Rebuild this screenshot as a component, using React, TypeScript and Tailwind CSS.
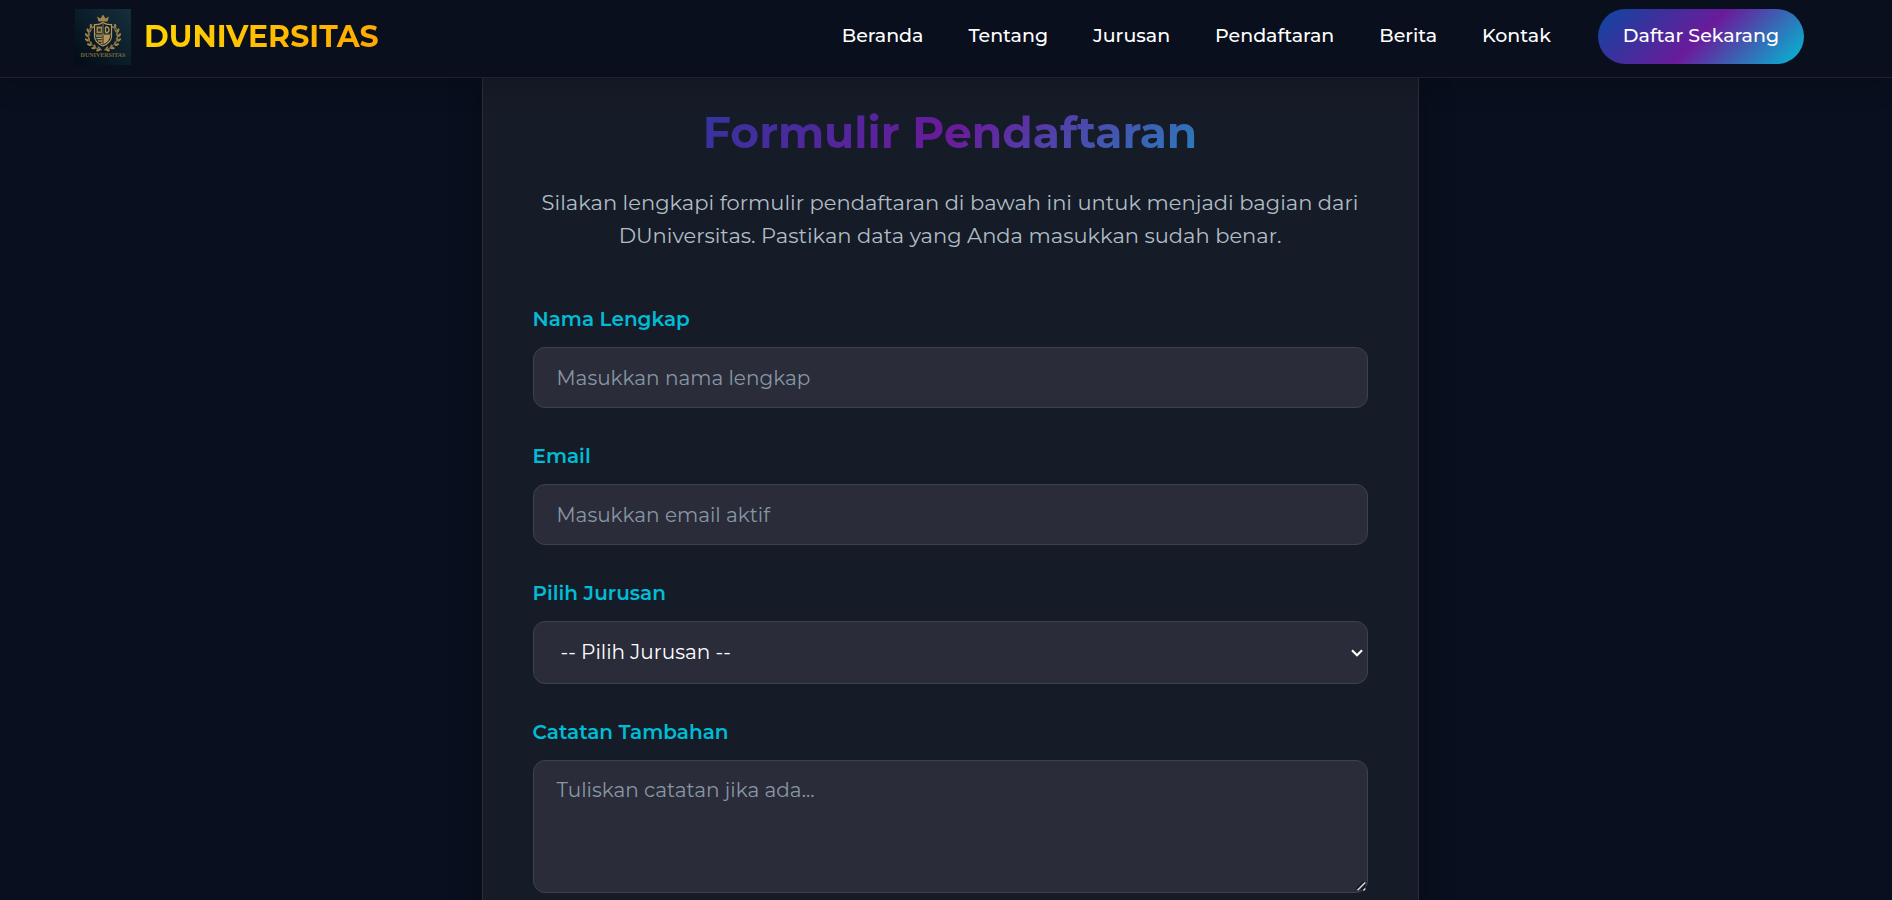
import React from "react";

const links = ["Beranda", "Tentang", "Jurusan", "Pendaftaran", "Berita", "Kontak"];

const fieldClass =
  "block w-full rounded-xl border border-[#3f404e] bg-[#2a2c3a] px-[23px] text-[20px] text-white placeholder:text-[#8797a2]";
const labelClass = "mb-3 block text-[20px] leading-8 font-semibold text-[#00bcd4]";

function Leaves() {
  const leaves = [
    [17, 17, 25],
    [14, 21, 5],
    [12.5, 25.5, -5],
    [12.5, 30, -20],
    [14.5, 34.5, -40],
    [18.5, 38, -60],
    [23, 40, -75],
  ];
  return (
    <g>
      <path d="M17 15.5 Q10 26 15.5 34 Q20 40 27 41" fill="none" stroke="#a08348" strokeWidth="0.9" />
      {leaves.map(([x, y, r]) => (
        <g key={y} transform={`translate(${x} ${y}) rotate(${r})`}>
          <ellipse cx="-1.2" cy="0" rx="1.1" ry="2.3" transform="rotate(-30)" fill="#a08348" />
          <ellipse cx="1.6" cy="0" rx="0.9" ry="2.1" transform="rotate(30)" fill="#8a713f" />
        </g>
      ))}
    </g>
  );
}

function Crest() {
  return (
    <svg viewBox="0 0 56 56" className="size-14 shrink-0" aria-hidden="true">
      <defs>
        <linearGradient id="crest-bg" x1="1" y1="0" x2="0" y2="1">
          <stop offset="0" stopColor="#172f3c" />
          <stop offset="0.5" stopColor="#0a1e2a" />
          <stop offset="1" stopColor="#020c15" />
        </linearGradient>
      </defs>
      <rect width="56" height="56" fill="url(#crest-bg)" />
      <path d="M23.5 12.5 L22 7.5 L25.5 9.5 L28 5.5 L30.5 9.5 L34 7.5 L32.5 12.5 Z" fill="#a08348" />
      <Leaves />
      <g transform="translate(56 0) scale(-1 1)">
        <Leaves />
      </g>
      <path d="M19.5 15.5 Q24 16 28 13.5 Q32 16 36.5 15.5 V27 Q36.5 33.5 28 37 Q19.5 33.5 19.5 27 Z" fill="#0b222e" stroke="#b8965a" strokeWidth="1.2" />
      <path d="M21.5 17.5 H27 V24 H21.5 Z" fill="#a08348" />
      <path d="M23 19.5 H25.8 V22.5 H23 Z" fill="#2a3030" />
      <path d="M30.5 18 V23.5 M30.5 18 H32 Q34 18.5 34 20.7 Q34 23.2 32 23.5 H30.5" fill="none" stroke="#b8965a" strokeWidth="1.3" />
      <path d="M21 27 H27.5 M21.5 29.5 H27.5 M23 32 H27.5 M25.5 34.3 H27.5" stroke="#b8965a" strokeWidth="1.4" />
      <path d="M28.7 26 H35 V27 Q34.8 32 28.7 35.3 Z" fill="#b8965a" />
      <path d="M28 14.5 V36 M20 25.2 H36" stroke="#b8965a" strokeWidth="0.7" />
      <text x="28" y="47.8" textAnchor="middle" fontSize="6" fontWeight="700" fill="#7d683d" className="font-['Liberation_Serif',serif]">
        DUNIVERSITAS
      </text>
    </svg>
  );
}

export default function App() {
  return (
    <div className="h-screen overflow-hidden bg-[#080f1e] font-['Montserrat','Inter',sans-serif] text-white">
      <header className="relative z-10 flex h-[78px] items-center justify-between border-b border-[#1f222e] bg-[#090f1d] pr-[88px] pl-[75px] shadow-[0_4px_30px_rgba(0,0,0,0.2)]">
        <a href="#beranda" className="flex items-center gap-[13px] pb-1">
          <Crest />
          <span className="bg-[linear-gradient(135deg,#ffd700,#ffa500)] bg-clip-text text-[30px] leading-10 font-bold text-transparent">
            DUNIVERSITAS
          </span>
        </a>
        <nav className="flex items-center gap-[47px] pb-1 text-[19px] leading-7 font-medium">
          <div className="flex gap-[45px] pb-0.5">
            {links.map((link) => (
              <a key={link} href={`#${link.toLowerCase()}`}>
                {link}
              </a>
            ))}
          </div>
          <a
            href="#daftar"
            className="flex h-[55px] items-center rounded-full bg-[linear-gradient(135deg,#0d47a1,#6a1b9a,#00bcd4)] px-[25px] pb-0.5"
          >
            Daftar Sekarang
          </a>
        </nav>
      </header>

      <div className="-mt-px flex justify-center pl-2">
        <main className="w-[937px] max-w-full border-x border-[#2a2e3b] bg-[#161b28] px-[50px] pt-7 pb-16 shadow-[0_8px_32px_rgba(0,0,0,0.25)]">
          <h1 className="bg-[linear-gradient(135deg,#0d47a1,#6a1b9a,#00bcd4)] bg-clip-text text-center text-[44px] leading-[55px] font-bold text-transparent">
            Formulir Pendaftaran
          </h1>
          <p className="mt-[26px] text-center text-[21px] leading-[33px] text-[#b0bec5]">
            Silakan lengkapi formulir pendaftaran di bawah ini untuk menjadi bagian dari DUniversitas. Pastikan data yang
            Anda masukkan sudah benar.
          </p>
          <form className="mt-[51px] flex flex-col gap-8">
            <div>
              <label htmlFor="nama" className={labelClass}>
                Nama Lengkap
              </label>
              <input id="nama" type="text" placeholder="Masukkan nama lengkap" className={`${fieldClass} h-[61px]`} />
            </div>
            <div>
              <label htmlFor="email" className={labelClass}>
                Email
              </label>
              <input id="email" type="email" placeholder="Masukkan email aktif" className={`${fieldClass} h-[61px]`} />
            </div>
            <div>
              <label htmlFor="jurusan" className={labelClass}>
                Pilih Jurusan
              </label>
              <div className="relative">
                <select id="jurusan" className={`${fieldClass} h-[63px] appearance-none pb-0.5 indent-1`}>
                  <option>-- Pilih Jurusan --</option>
                </select>
                <svg
                  viewBox="0 0 12 8"
                  className="pointer-events-none absolute top-7 right-[5px] h-2 w-3"
                  fill="none"
                  stroke="#ffffff"
                  strokeWidth="2.2"
                  aria-hidden="true"
                >
                  <path d="M1 1.2 L6 6.2 L11 1.2" />
                </svg>
              </div>
            </div>
            <div>
              <label htmlFor="catatan" className={labelClass}>
                Catatan Tambahan
              </label>
              <div className="relative">
                <textarea
                  id="catatan"
                  placeholder="Tuliskan catatan jika ada..."
                  className={`${fieldClass} h-[133px] py-[14px] [&::-webkit-resizer]:hidden`}
                />
                <svg
                  viewBox="0 0 10 10"
                  className="pointer-events-none absolute right-0.5 bottom-0.5 size-2.5"
                  fill="none"
                  aria-hidden="true"
                >
                  <path d="M0.5 7.8 L7.8 0.5 M5.5 8.5 L9.3 4.7" stroke="#16171f" strokeWidth="1.8" />
                  <path d="M1.5 9.2 L9.2 1.5 M7.4 9.4 L9.4 7.4" stroke="#d8d8dc" strokeWidth="1.4" />
                </svg>
              </div>
            </div>
          </form>
        </main>
      </div>
    </div>
  );
}
